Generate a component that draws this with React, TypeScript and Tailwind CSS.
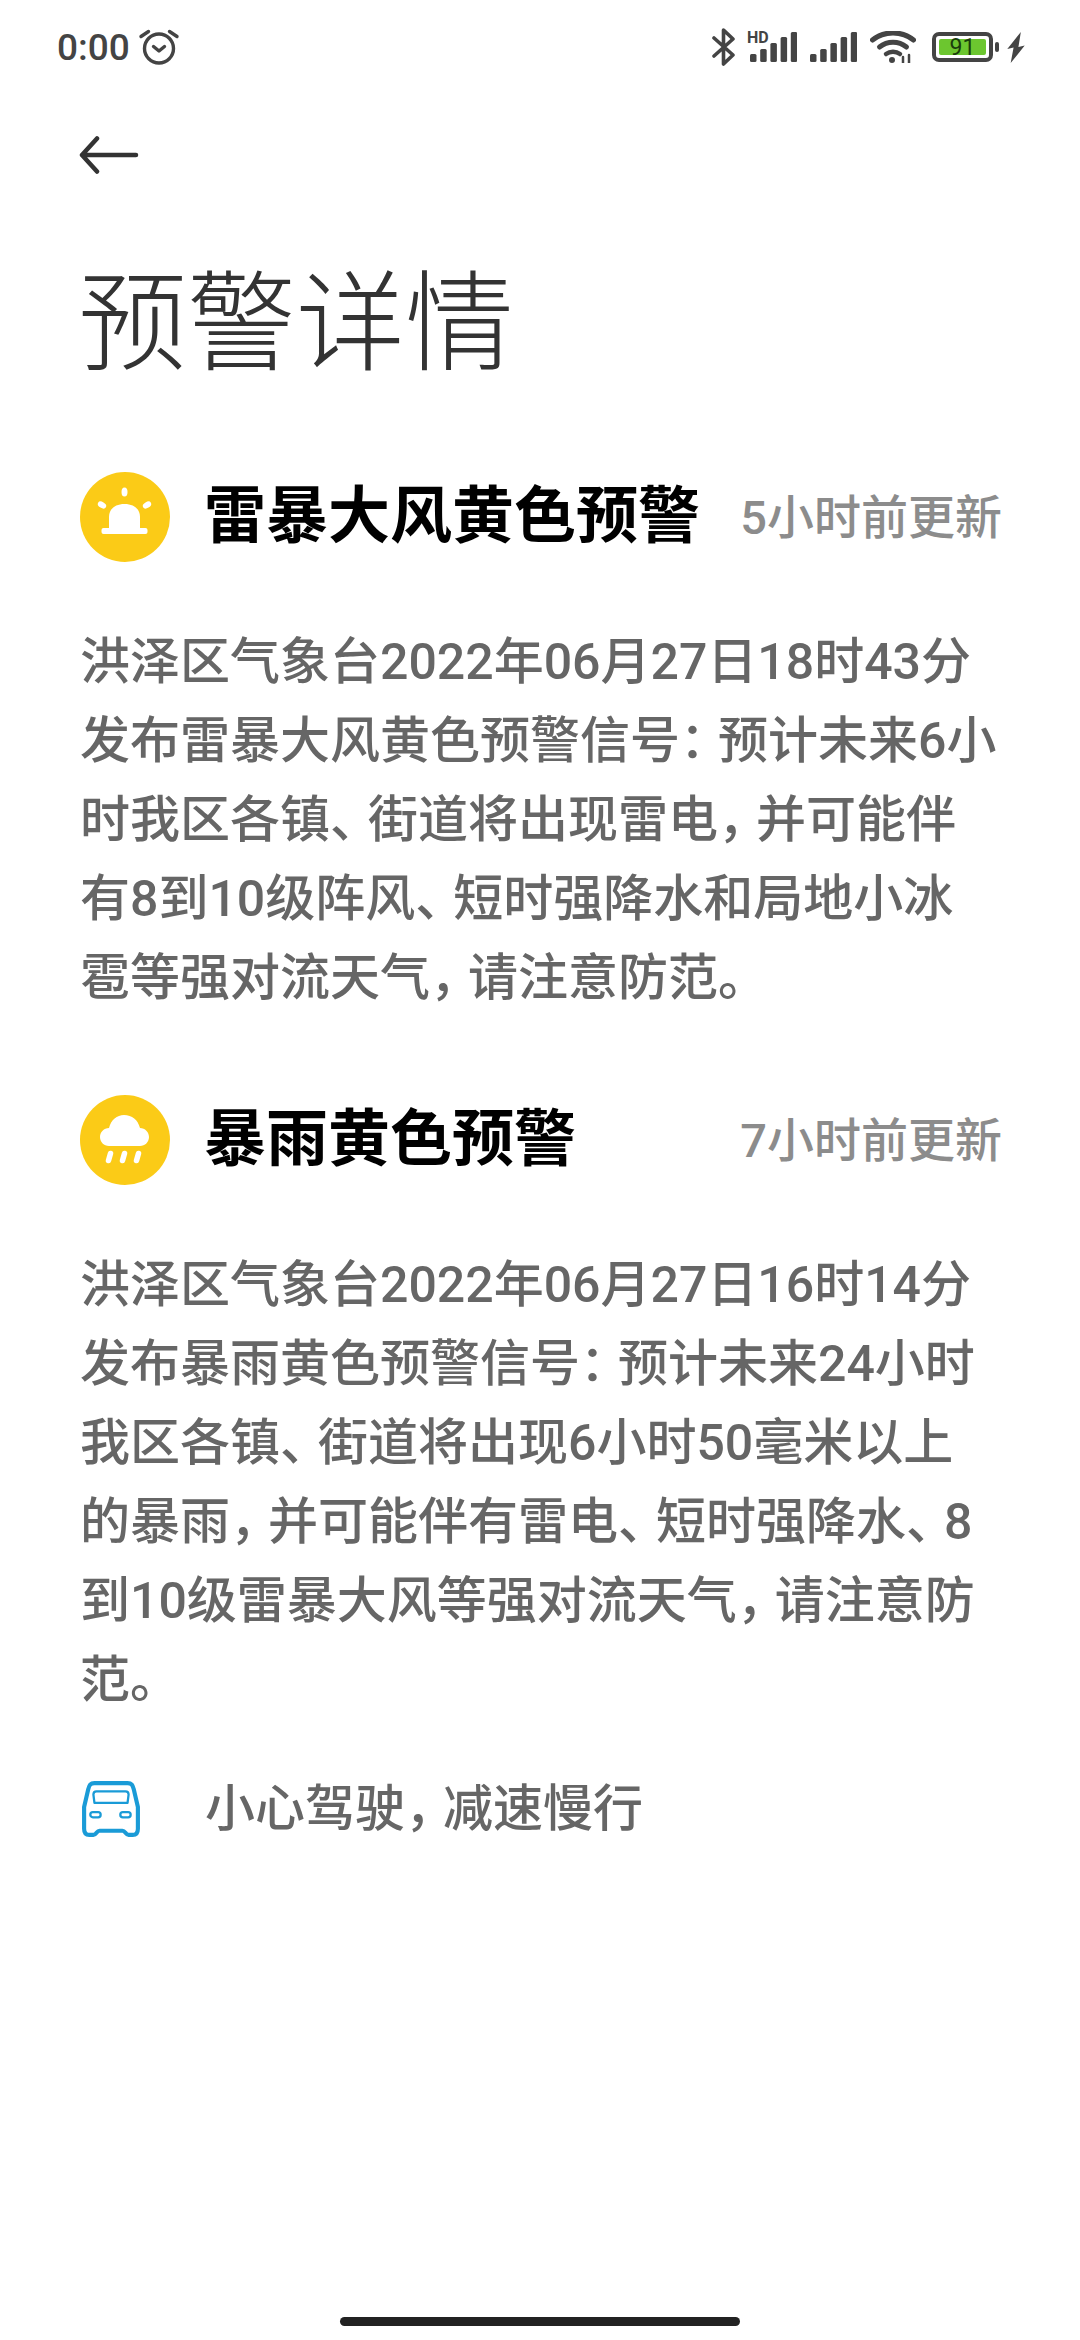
const CJK = "font-['Roboto','Noto_Sans_CJK_SC',sans-serif]"

function Signal() {
  const heights = [8, 13, 19, 25, 30]
  return (
    <svg width="47" height="30" viewBox="0 0 47 30" className="block">
      {heights.map((h, i) => (
        <rect key={i} x={i * 10.2} y={30 - h} width="6.500" height={h} rx="1.500" fill="#444" />
      ))}
    </svg>
  )
}

function StatusBar() {
  return (
    <div className="flex h-[94px] items-center justify-between pl-[57px] pr-[55px] text-[#444]">
      <div className="flex items-center gap-[8px]">
        <span className="font-['Roboto',sans-serif] text-[37px] font-medium leading-none">0:00</span>
        <svg width="42" height="38" viewBox="0 0 42 38" fill="none" stroke="#444" strokeWidth="3.400" strokeLinecap="round" strokeLinejoin="round" className="mt-[-2px]">
          <circle cx="21" cy="21.500" r="14.500" />
          <path d="M15.500 19.500l5.500 4.500 5.500-4.500" />
          <path d="M3 9.500l7.500-5M39 9.500l-7.500-5" />
        </svg>
      </div>
      <div className="flex items-center">
        <svg width="23" height="38" viewBox="0 0 23 38" fill="none" stroke="#444" strokeWidth="3.600" strokeLinejoin="round" strokeLinecap="round">
          <path d="M2 10l19 17-9.500 9V2L21 11 2 28" />
        </svg>
        <div className="relative ml-[15px] h-[30px] w-[47px]">
          <span className="absolute left-[-3px] top-[-2px] font-['Roboto',sans-serif] text-[16px] font-bold leading-none">HD</span>
          <Signal />
        </div>
        <div className="ml-[13px] h-[30px] w-[47px]"><Signal /></div>
        <svg width="46" height="32" viewBox="0 0 46 32" fill="none" stroke="#444" strokeWidth="5" strokeLinecap="round" className="ml-[13px]">
          <path d="M2.500 9C14-.5 32-.5 43.500 9" />
          <path d="M9.500 16c8-6.500 19-6.500 27 0" />
          <path d="M16 23c4-3 10-3 14 0" strokeWidth="4.500" />
          <circle cx="22" cy="29" r="2" strokeWidth="2" fill="#444" />
          <path d="M33 26v6M39 24v8" strokeWidth="2.500" />
        </svg>
        <div className="ml-[16px] flex h-[30px] w-[61px] items-center rounded-[7px] border-[4px] border-[#444] p-[3px]">
          <div className="flex h-full w-full items-center justify-center rounded-[2px] bg-[#6cc62f] font-['Roboto',sans-serif] text-[23px] leading-none text-[#1a3d0c]">91</div>
        </div>
        <div className="ml-[2px] h-[10px] w-[4px] rounded-full bg-[#444]" />
        <svg width="18" height="31" viewBox="0 0 18 32" fill="#444" className="ml-[8px]">
          <path d="M14 0L0 17.500l6.500-1.500L3.500 32 18 14l-6.500 1.500L14 0z" />
        </svg>
      </div>
    </div>
  )
}

function AlarmIcon() {
  return (
    <svg width="90" height="90" viewBox="0 0 90 90">
      <circle cx="45" cy="45" r="45" fill="#fbcb17" />
      <path d="M29 58V45c0-8 6-13 15.500-13S60 37 60 45v13z" fill="#fff" />
      <rect x="21.500" y="56" width="46" height="6" rx="2" fill="#fff" />
      <ellipse cx="44.500" cy="20" rx="3" ry="4.500" fill="#fff" />
      <ellipse cx="22" cy="33" rx="3" ry="4.500" transform="rotate(-60 22 33)" fill="#fff" />
      <ellipse cx="67" cy="33" rx="3" ry="4.500" transform="rotate(60 67 33)" fill="#fff" />
    </svg>
  )
}

function RainIcon() {
  return (
    <svg width="90" height="90" viewBox="0 0 90 90">
      <circle cx="45" cy="45" r="45" fill="#fbcb17" />
      <path d="M29 51c-5 0-9-4-9-9s4-9 9-9c2-8 8-13 15-13 8 0 14 5 16 13 5 0 9 4 9 9s-4 9-9 9z" fill="#fff" />
      <g stroke="#fff" strokeWidth="5.500" strokeLinecap="round">
        <path d="M30.500 58.500l-2 7M44.500 58.500l-2 7M58.500 58.500l-2 7" />
      </g>
    </svg>
  )
}

function CarIcon() {
  return (
    <svg width="60" height="58" viewBox="0 0 58 56" fill="none" stroke="#1a9bd7">
      <path d="M13 3h32c4 0 5 2 6 6l4 17v21c0 4-2 6-5 6h-4c-3 0-3-4-6-4H18c-3 0-3 4-6 4H8c-3 0-5-2-5-6V26L7 9c1-4 2-6 6-6z" strokeWidth="4" strokeLinejoin="round" />
      <path d="M15 11h28c2 0 3 1 3 3l-1 8H13l-1-8c0-2 1-3 3-3z" strokeWidth="2.200" strokeLinejoin="round" />
      <rect x="9" y="31" width="10" height="5" rx="2.500" strokeWidth="2.200" />
      <rect x="38" y="31" width="10" height="5" rx="2.500" strokeWidth="2.200" />
    </svg>
  )
}

// the phone's font sets these narrower than a full em
function BodyLine({ text }: { text: string }) {
  return (
    <div className="whitespace-nowrap">
      {text.split(/([：，、])/).map((part, i) =>
        i % 2 === 1 ? (
          <span key={i} className="tracking-[-12px]">{part}</span>
        ) : (
          <span key={i}>{part}</span>
        ),
      )}
    </div>
  )
}

const alerts = [
  {
    icon: <AlarmIcon />,
    title: '雷暴大风黄色预警',
    time: '5小时前更新',
    lines: [
      '洪泽区气象台2022年06月27日18时43分',
      '发布雷暴大风黄色预警信号：预计未来6小',
      '时我区各镇、街道将出现雷电，并可能伴',
      '有8到10级阵风、短时强降水和局地小冰',
      '雹等强对流天气，请注意防范。',
    ],
  },
  {
    icon: <RainIcon />,
    title: '暴雨黄色预警',
    time: '7小时前更新',
    lines: [
      '洪泽区气象台2022年06月27日16时14分',
      '发布暴雨黄色预警信号：预计未来24小时',
      '我区各镇、街道将出现6小时50毫米以上',
      '的暴雨，并可能伴有雷电、短时强降水、8',
      '到10级雷暴大风等强对流天气，请注意防',
      '范。',
    ],
  },
]

export default function App() {
  return (
    <div className={`flex h-[2340px] w-[1080px] flex-col bg-white ${CJK}`}>
      <StatusBar />
      <div className="pl-[79px] pt-[42px]">
        <svg width="60" height="38" viewBox="0 0 60 38" fill="none" stroke="#333" strokeWidth="4.500" strokeLinecap="round" strokeLinejoin="round" className="block">
          <path d="M57 19H3M18 2.500L3 19l15 16.500" />
        </svg>
      </div>
      <h1 className="mt-[86px] pl-[78px] text-[109px] font-light leading-[130px] text-[#333]">预警详情</h1>
      <div className="mt-[82px] flex flex-col gap-[77px] px-[80px]">
        {alerts.map((a) => (
          <div key={a.title}>
            <div className="flex h-[90px] items-center">
              {a.icon}
              <span className="ml-[34px] text-[62px] font-bold leading-none text-black">{a.title}</span>
              <span className="ml-auto mr-[-2px] text-[47px] font-medium leading-none text-[#8c8c8c]">{a.time}</span>
            </div>
            <div className="mt-[61px] text-[50px] font-medium leading-[79px] text-[#666]">
              {a.lines.map((l) => (
                <BodyLine key={l} text={l} />
              ))}
            </div>
          </div>
        ))}
      </div>
      <div className="mt-[59px] flex h-[60px] items-center pl-[81px] text-[50px] font-medium leading-none text-[#666]">
        <CarIcon />
        <span className="ml-[64px]"><BodyLine text="小心驾驶，减速慢行" /></span>
      </div>
      <div className="mt-auto flex justify-center pb-[14px]">
        <div className="h-[9px] w-[400px] rounded-full bg-[#222]" />
      </div>
    </div>
  )
}
